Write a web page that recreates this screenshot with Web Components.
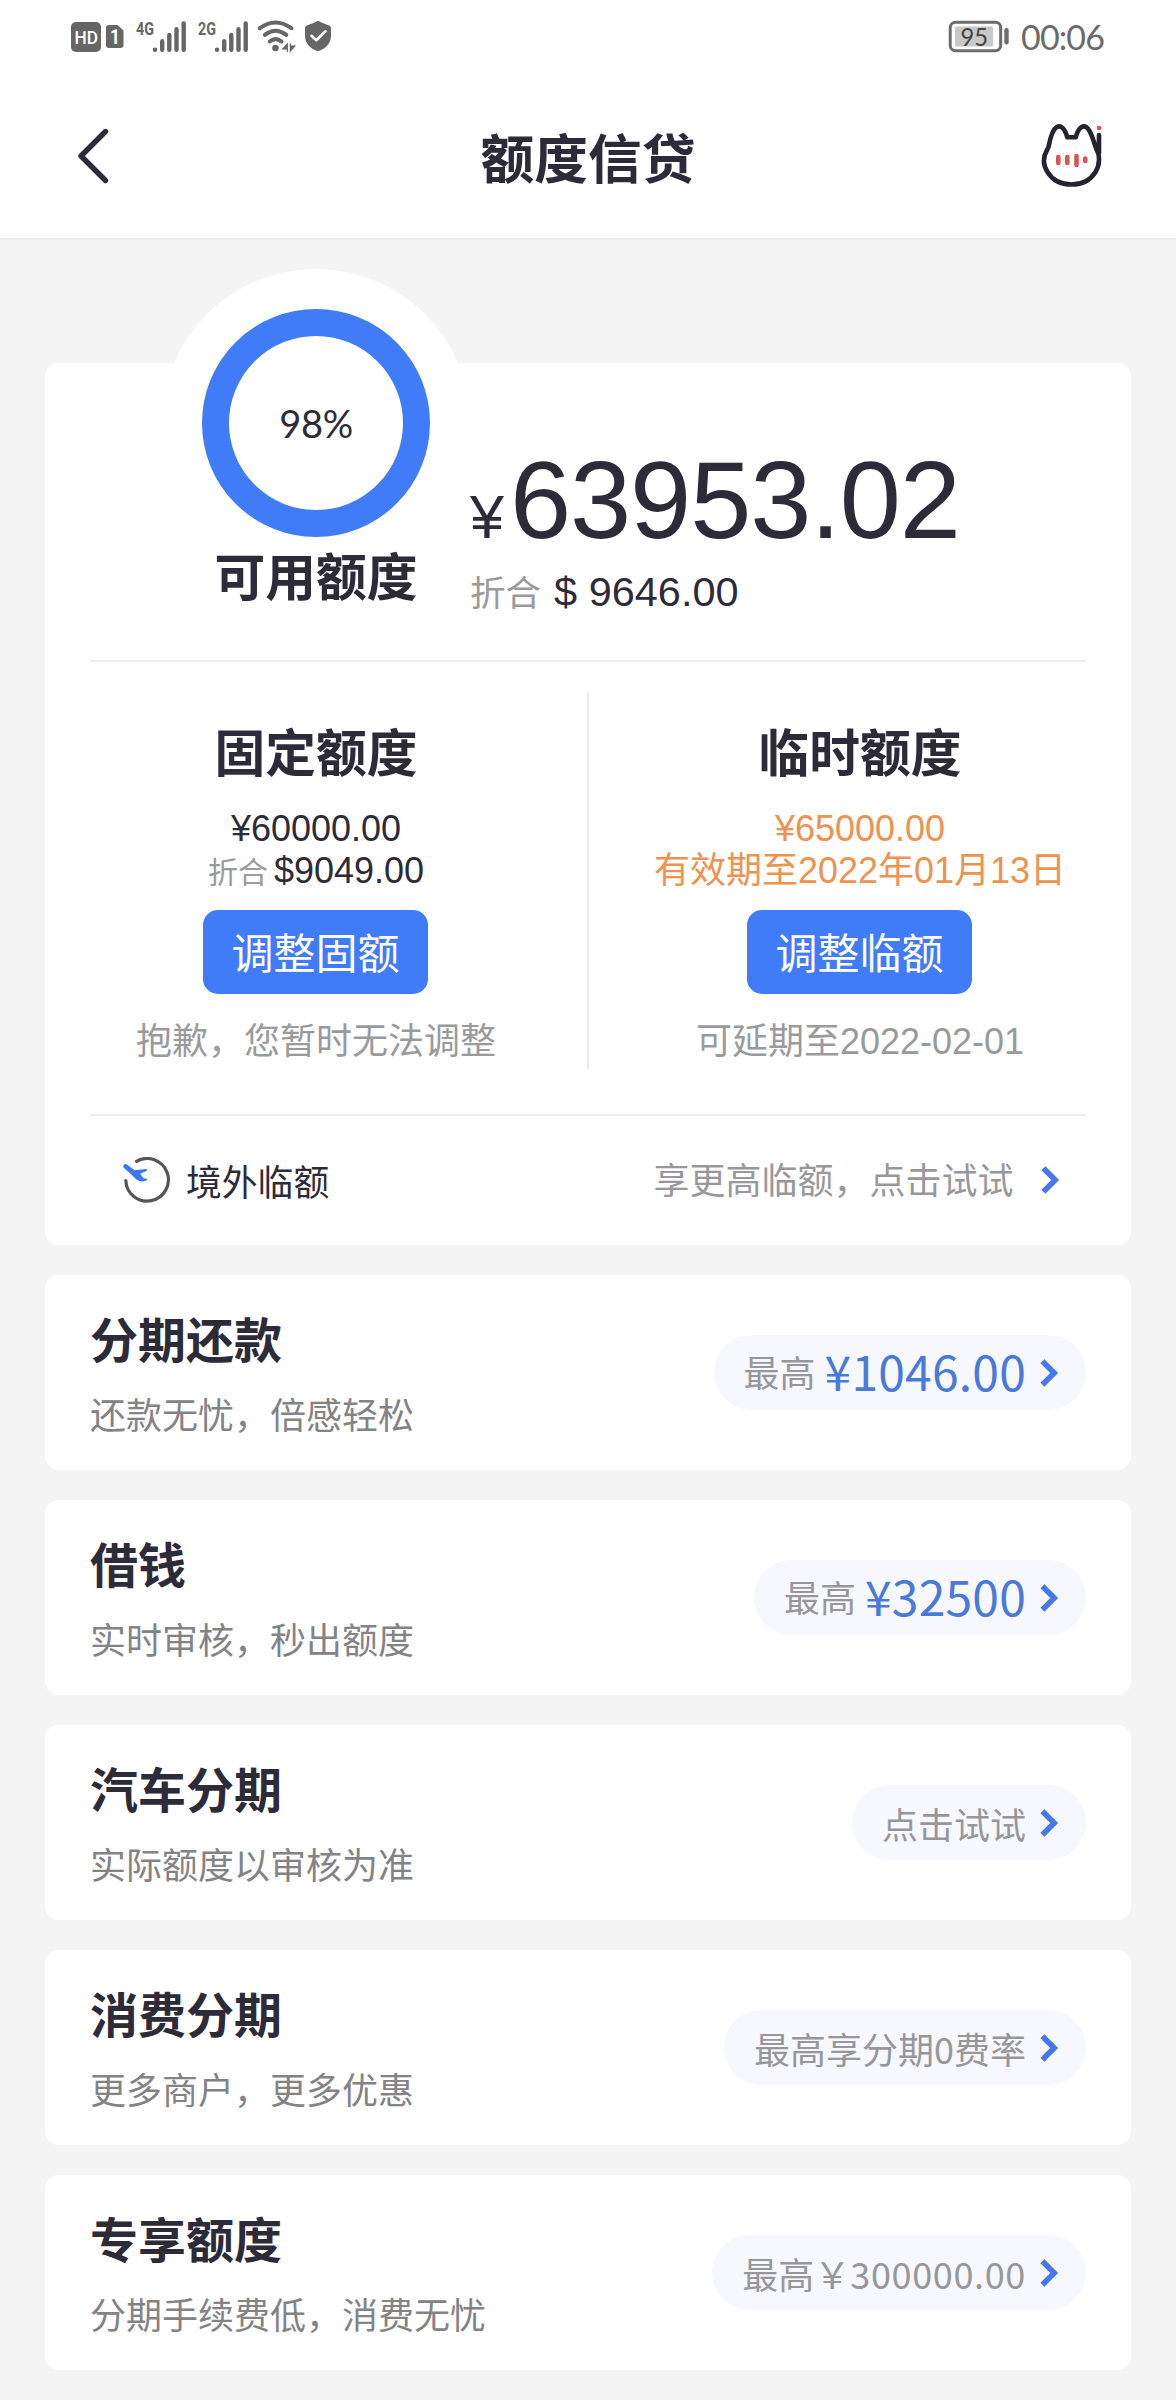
<!DOCTYPE html>
<html lang="zh-CN">
<head>
<meta charset="utf-8">
<title>额度信贷</title>
<style>
html,body{margin:0;padding:0}
body{width:1176px;height:2400px;overflow:hidden;background:#f4f4f4;color:#2e2b39;
 font-family:"Noto Sans CJK SC",sans-serif;
 --num:"Liberation Sans","Noto Sans CJK SC",sans-serif;--blue:#407bf8;--line:#ececec}
</style>
</head>
<body>
<credit-page></credit-page>
<script>
function define(name, html, setup) {
  const t = document.createElement('template');
  t.innerHTML = html;
  customElements.define(name, class extends HTMLElement {
    connectedCallback() {
      if (this.shadowRoot) return;
      const root = this.attachShadow({mode: 'open'});
      root.appendChild(t.content.cloneNode(true));
      if (setup) setup(this, root);
    }
  });
}

define('blue-chevron', `
<style>:host{display:block;width:19px;height:30px;flex:none}svg{display:block}</style>
<svg width="19" height="30" viewBox="0 0 19 30"><path d="M2.4 3.2 14.2 15 2.4 26.8" fill="none" stroke="#4678e8" stroke-width="5.6"/></svg>`);

define('signal-bars', `
<style>:host{display:block;width:51px;height:41px}svg{display:block}</style>
<svg width="51" height="41" viewBox="0 -10 51 41" fill="none">
<text x="0" y="14" font-family="Roboto" font-weight="700" font-size="19" fill="#666" textLength="18" lengthAdjust="spacingAndGlyphs"></text>
<path d="M19 28.6v.1M26.2 20.2v8.5M33.3 14v14.7M40.5 8.2v20.5M47.7 2.5v26.2" stroke="#666" stroke-width="4.4" stroke-linecap="round"/>
</svg>`, (el, root) => { root.querySelector('text').textContent = el.getAttribute('net'); });

define('status-bar', `
<style>
:host{display:flex;height:75px;box-sizing:border-box;padding:20px 72px 0 71px;justify-content:space-between;align-items:flex-start}
.l,.r{display:flex;align-items:flex-start}
svg{display:block}
signal-bars{margin-top:-9px}
.time{font:400 34px/35px Lato,sans-serif;color:#6a6a6a;letter-spacing:-.9px;margin:-1px 0 0 12px;height:35px}
</style>
<div class="l">
<svg width="53" height="34" viewBox="0 0 53 34"><rect x="0" y="2" width="30" height="30" rx="5" fill="#666"/>
<text x="3.5" y="24.2" font-family="Roboto" font-weight="500" font-size="19" fill="#fff" textLength="23.5" lengthAdjust="spacingAndGlyphs">HD</text>
<path d="M38 5h8.5l6 5.500V25a3 3 0 0 1-3 3H38a3 3 0 0 1-3-3V8a3 3 0 0 1 3-3z" fill="#666"/>
<text x="39" y="24.300" font-family="Roboto" font-weight="700" font-size="20" fill="#fff" textLength="10" lengthAdjust="spacingAndGlyphs">1</text></svg>
<signal-bars net="4G" style="margin-left:12px"></signal-bars>
<signal-bars net="2G" style="margin-left:11px"></signal-bars>
<svg width="40" height="33" viewBox="0 0 40 33" style="margin-left:8px" fill="none" stroke="#666" stroke-width="4" stroke-linecap="round">
<path d="M2.800 8.200Q18.500-3.300 34.300 8.200"/><path d="M7.800 14.800Q18.500 6.600 29.300 14.800"/><path d="M12.800 21.500Q18.500 16.700 24.500 21.500"/>
<circle cx="18.500" cy="28" r="3.300" fill="#666" stroke="none"/>
<path d="M30.300 23.500v8.500M30.300 24l-4.500 5h4.500zM33.300 31.500V23.500M33.300 31l4.500-5h-4.500z" stroke-width="1.200" fill="#666" stroke-linecap="butt"/></svg>
<svg width="26" height="32" viewBox="0 0 26 32" style="margin-left:8px"><path d="M13 1c1.500 0 5 2.500 10.500 4.300 1.700.6 2.500 1.500 2.500 3.200v7.500C26 24 20 28.500 14.500 30.800q-1.500.6-3 0C6 28.500 0 24 0 16V8.500C0 6.800.8 5.900 2.500 5.300 8 3.500 11.500 1 13 1z" fill="#666"/><path d="M6.500 15.800l4.800 4.400 9.200-9" fill="none" stroke="#fff" stroke-width="2.600" stroke-linecap="round" stroke-linejoin="round"/></svg>
</div>
<div class="r">
<svg width="61" height="34" viewBox="0 0 61 34"><rect x="2.200" y="2.200" width="50.500" height="28.600" rx="5.500" fill="#fff" stroke="#6c6c6c" stroke-width="3"/><rect x="7" y="6.500" width="38" height="20" rx="1.500" fill="#c8c8c8"/>
<text x="12.500" y="25.700" font-family="Lato" font-size="25" fill="#444" textLength="27.500" lengthAdjust="spacingAndGlyphs">95</text><rect x="56.300" y="8" width="4.400" height="16.500" rx="2" fill="#6c6c6c"/></svg>
<div class="time">00:06</div>
</div>`);

define('title-bar', `
<style>
:host{display:grid;grid-template-columns:1fr auto 1fr;align-items:center;height:165px;box-sizing:border-box;border-bottom:2px solid var(--line);padding:0 73px 0 76px}
h1{margin:0 3px 2px 0;font-size:53.700px;line-height:60px;font-weight:700;color:#2e2b39}
svg{display:block;margin-bottom:1px}.cat{justify-self:end}
</style>
<svg width="34" height="58" viewBox="0 0 34 58"><path d="M29.500 4.500 5 29l24.500 24.500" fill="none" stroke="#2e2b39" stroke-width="5.400" stroke-linecap="round" stroke-linejoin="round"/></svg>
<h1>额度信贷</h1>
<svg class="cat" width="62" height="66" viewBox="0 0 62 66" fill="none">
<path d="M58 12V30M7.500 24C9 16 11 7 15.500 4.300 20 1.500 24 6 26.300 14.300h8.400C37 6 41 1.500 45.500 4.300 50 7 52 17 55.500 26.500 59 32 59 42 54.500 49 49 58 40 61.500 30.500 61.500S12 58 6.500 49C2 42 2 34 6 27z" stroke="#24242e" stroke-width="4.600" stroke-linejoin="round" stroke-linecap="round"/>
<path d="M17.300 34v6M26.300 34v6M35.500 33v9M44.300 35.500v2.500" stroke="#dc5450" stroke-width="4.600" stroke-linecap="round"/><circle cx="58" cy="5" r="2.300" fill="#e05058"/></svg>`);

define('quota-ring', `
<style>
:host{display:grid;width:308px;height:308px;place-items:center}
svg,span{grid-area:1/1}svg{display:block}
span{font:400 38px/40px Lato,sans-serif;color:#2e2b39;letter-spacing:-.3px;position:relative}
</style>
<svg width="308" height="308" viewBox="0 0 308 308"><circle cx="154" cy="154" r="154" fill="#fff"/><circle cx="154" cy="154" r="100.500" fill="none" stroke="#407bf8" stroke-width="27"/></svg>
<span><slot></slot></span>`);

define('quota-column', `
<style>
:host{display:flex;flex-direction:column;align-items:center;padding-top:63px;font-family:var(--num);font-size:36px}
h2{margin:0 0 33px;font:700 50.700px/50px "Noto Sans CJK SC",sans-serif}
::slotted(*){display:flex;align-items:baseline;height:42px;line-height:42px;white-space:nowrap}
.btn{margin:18px 1px 0 0;width:225px;height:84px;border-radius:15px;background:var(--blue);color:#fff;font:400 42px/82px "Noto Sans CJK SC",sans-serif;text-align:center}
.hint{margin-top:28px;line-height:40px;color:#999a9c;white-space:nowrap}
</style>
<h2></h2><slot></slot><div class="btn"></div><div class="hint"></div>`, (el, root) => {
  root.querySelector('h2').textContent = el.getAttribute('name');
  root.querySelector('.btn').textContent = el.getAttribute('action');
  root.querySelector('.hint').textContent = el.getAttribute('hint');
});

define('quota-card', `
<style>
:host{display:block;height:882px;margin:123px 45px 0;background:#fff;border-radius:14px}
.top{display:flex;height:297px;padding-left:117px}
.ring{width:308px;margin-top:-94px}
.name{margin-top:-28px;text-align:center;font-size:50.700px;line-height:50px;font-weight:700}
.money{padding-top:82px;font-family:var(--num)}
.big{display:flex;align-items:baseline;height:110px;font-size:110px;line-height:110px;letter-spacing:-1.100px}
.big small{font-size:61px;letter-spacing:0;margin-right:6px;line-height:62px}
.usd{display:flex;align-items:baseline;margin-top:12px;font-size:41.500px;line-height:50px;height:50px}
.usd small{font:400 35.500px/36px "Noto Sans CJK SC",sans-serif;color:#9a9a9c;margin-right:13px}
hr{border:0;height:2px;background:var(--line);margin:0 45px}
.cols{display:grid;grid-template-columns:542px 2px 1fr;height:452px}
.v{background:var(--line);margin:30px 0 45px}
.grey{font:400 30px/30px "Noto Sans CJK SC",sans-serif;color:#9a9a9c;margin-right:6px}
.orange{color:#ee9250}
.foot{display:flex;align-items:center;height:129px;padding:0 71px 0 78px;font-size:36px;line-height:40px}
.foot .more{margin-left:auto;color:#98989c;margin-right:27.500px;margin-top:-5px}
.foot .t{margin:-1px 0 0 15px;font-size:35.800px}
blue-chevron{margin-bottom:1px}
svg{display:block}
</style>
<div class="top">
 <div class="ring"><quota-ring>98%</quota-ring><div class="name">可用额度</div></div>
 <div class="money"><div class="big"><small>¥</small><span>63953.02</span></div><div class="usd"><small>折合</small><span>$ 9646.00</span></div></div>
</div>
<hr>
<div class="cols">
 <quota-column name="固定额度" action="调整固额" hint="抱歉，您暂时无法调整"><div>¥60000.00</div><div><span class="grey">折合</span><span>$9049.00</span></div></quota-column>
 <div class="v"></div>
 <quota-column name="临时额度" action="调整临额" hint="可延期至2022-02-01"><div class="orange">¥65000.00</div><div class="orange">有效期至2022年01月13日</div></quota-column>
</div>
<hr>
<div class="foot">
 <svg width="48" height="48" viewBox="0 0 48 48"><path d="M13.500 4.300A21.300 21.300 0 1 1 2.800 23.500" fill="none" stroke="#55555a" stroke-width="3.200" stroke-linecap="round"/>
 <path d="M.3 9.300Q.8 6 3.600 7.200L11.500 13.300 22.800 12Q25.200 12.300 23.500 14L17.300 16.700 20.500 21.200 23.700 21.700Q25 23.300 21.500 24.200 17 25 13.500 22.500L8 17.200 1.500 11.600Q.2 10.600.3 9.300z" fill="#3f78ee"/></svg>
 <span class="t">境外临额</span><span class="more">享更高临额，点击试试</span><blue-chevron></blue-chevron>
</div>`);

define('product-card', `
<style>
:host{display:flex;justify-content:space-between;align-items:center;height:195px;box-sizing:border-box;margin:30px 45px 0;padding:0 45px;background:#fff;border-radius:14px}
.txt{display:flex;flex-direction:column}
h3{margin:0;font-size:48px;line-height:50px;font-weight:700;height:50px}
p{margin:31px 0 0;font-size:36px;line-height:40px;color:#838386}
.pill{display:flex;align-items:center;height:75px;box-sizing:border-box;border-radius:38px;background:#f7f8fd;padding:0 27.500px 0 30px;color:#97979b;font-size:36px;line-height:40px;white-space:nowrap}
.pill span{display:flex;align-items:center;margin-right:13.500px}
blue-chevron{margin-top:1px}
::slotted(em){font-style:normal;margin-top:-4px}
::slotted(b){font-weight:400;font-size:48px;line-height:40px;color:#4a7ad8;margin-left:9px;letter-spacing:.2px;margin-top:-5px}
::slotted(i){font-style:normal;letter-spacing:.65px}
</style>
<div class="txt"><h3></h3><p></p></div>
<div class="pill"><span><slot></slot></span><blue-chevron></blue-chevron></div>`, (el, root) => {
  root.querySelector('h3').textContent = el.getAttribute('name');
  root.querySelector('p').textContent = el.getAttribute('note');
});

define('credit-page', `
<style>:host{display:block;height:2400px}header{background:#fff}</style>
<header><status-bar></status-bar><title-bar></title-bar></header>
<quota-card></quota-card>
<product-card name="分期还款" note="还款无忧，倍感轻松"><em>最高</em><b>¥1046.00</b></product-card>
<product-card name="借钱" note="实时审核，秒出额度"><em>最高</em><b>¥32500</b></product-card>
<product-card name="汽车分期" note="实际额度以审核为准">点击试试</product-card>
<product-card name="消费分期" note="更多商户，更多优惠">最高享分期0费率</product-card>
<product-card name="专享额度" note="分期手续费低，消费无忧">最高￥<i>300000.00</i></product-card>`);
</script>
</body>
</html>
